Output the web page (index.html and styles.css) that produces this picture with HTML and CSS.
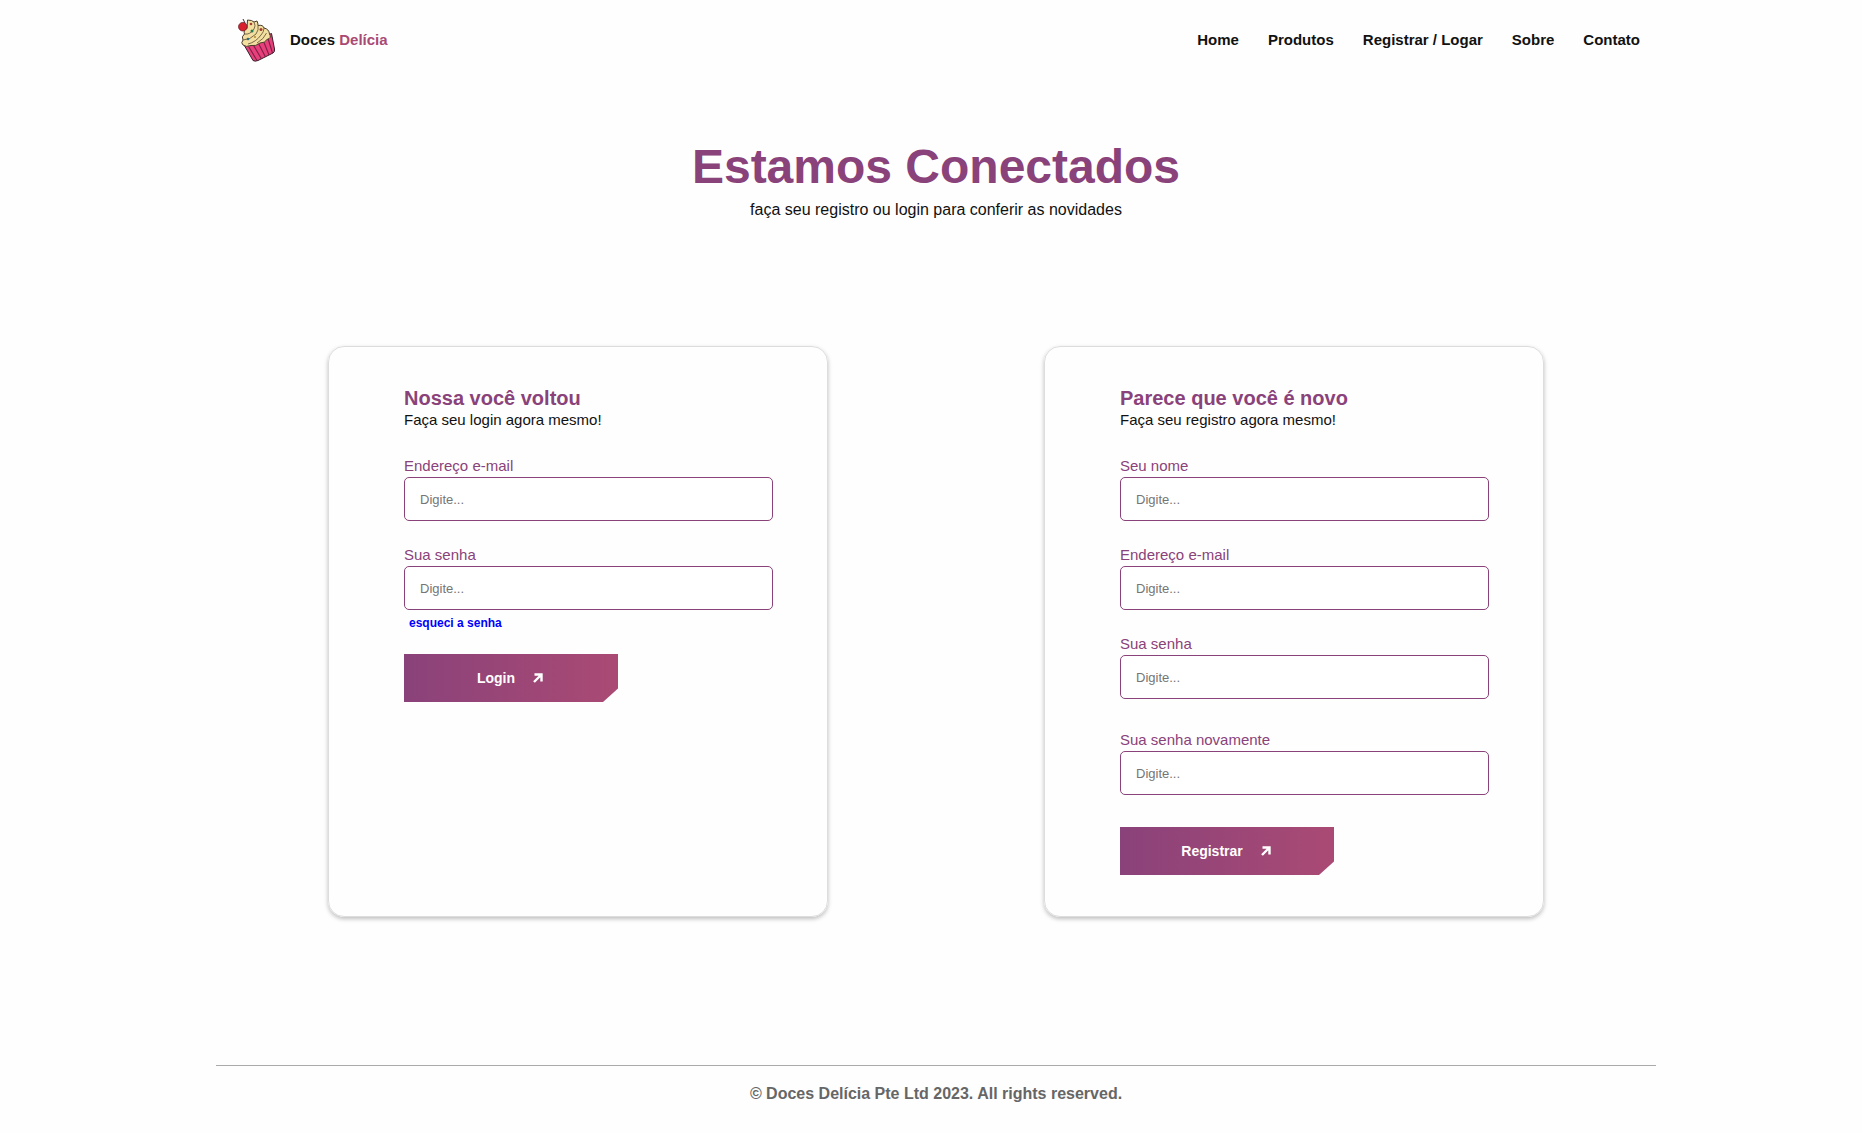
FILE: index.html
```html
<!DOCTYPE html>
<html lang="pt-BR">
<head>
<meta charset="utf-8">
<meta name="viewport" content="width=device-width, initial-scale=1">
<title>Doces Delícia</title>
<link rel="stylesheet" href="styles.css">
</head>
<body>
<div class="page">
  <header class="header">
    <a class="brand" href="#">
      <svg class="brand-logo" viewBox="0 0 38 44" aria-hidden="true">
        <path d="M5.500 26 L15 42.500 Q17 43.800 20 42.500 L35 35 Q37 34 36.500 31 L33.500 15.500 Z" fill="#e8407a" stroke="#33202a" stroke-width="1"/>
        <path d="M10 27.500 L19 42.500 M15 26.500 L23.500 41 M20 24.500 L27.500 39 M25 22 L31 37 M29.500 19 L34.500 35" fill="none" stroke="#7d1f48" stroke-width="1.100"/>
        <path d="M9.500 2 Q14 2 16 4 L19 3 Q20 5 20 7.500 Q25 6.500 26 10 Q31 11 31.500 16 Q34 20 29 21.500 Q27 25 22 25 Q18 28.500 13 27.500 Q8 29.500 5 27 Q2.500 25 5 22 Q3 18.500 6.500 16 Q5 12 9 10.500 Z" fill="#f3dfa0" stroke="#4a3c2a" stroke-width="1"/>
        <path d="M6.500 16 Q12 17 16 11 Q18 8 16 4 M5 22 Q12 22 18 16 Q21 12 20 7.500 M10 26 Q18 24 23 17 Q26 14 26 10 M19 25 Q26 21 28.500 15" fill="none" stroke="#6d5b3d" stroke-width="0.900"/>
        <circle cx="4.800" cy="8.700" r="4.300" fill="#d8202f" stroke="#5b1820" stroke-width="0.700"/>
        <path d="M7 5 L5 1" fill="none" stroke="#47242a" stroke-width="1"/>
        <circle cx="13" cy="6" r="1.300" fill="#a33c31"/><circle cx="14" cy="13" r="1.500" fill="#267a58"/>
        <circle cx="23" cy="11.500" r="1.500" fill="#a33c31"/><circle cx="10" cy="21" r="1.300" fill="#2d7181"/><circle cx="17" cy="19" r="1" fill="#b58a2d"/>
      </svg>
      <span class="brand-name">Doces <span class="brand-accent">Delícia</span></span>
    </a>
    <nav class="nav">
      <a href="#">Home</a>
      <a href="#">Produtos</a>
      <a href="#">Registrar / Logar</a>
      <a href="#">Sobre</a>
      <a href="#">Contato</a>
    </nav>
  </header>

  <main>
    <section class="intro">
      <h1>Estamos Conectados</h1>
      <p>faça seu registro ou login para conferir as novidades</p>
    </section>

    <div class="cards">
      <form class="card">
        <h2>Nossa você voltou</h2>
        <p class="lead">Faça seu login agora mesmo!</p>
        <div class="field">
          <label for="login-email">Endereço e-mail</label>
          <input id="login-email" type="email" placeholder="Digite...">
        </div>
        <div class="field">
          <label for="login-password">Sua senha</label>
          <input id="login-password" type="password" placeholder="Digite...">
        </div>
        <a class="forgot" href="#">esqueci a senha</a>
        <button class="button" type="button">Login
          <svg class="arrow" viewBox="0 0 10 10" aria-hidden="true"><path d="M1.500 1.500H8.500V8.500M8.500 1.500L1 9"/></svg>
        </button>
      </form>

      <form class="card">
        <h2>Parece que você é novo</h2>
        <p class="lead">Faça seu registro agora mesmo!</p>
        <div class="field">
          <label for="name">Seu nome</label>
          <input id="name" type="text" placeholder="Digite...">
        </div>
        <div class="field">
          <label for="email">Endereço e-mail</label>
          <input id="email" type="email" placeholder="Digite...">
        </div>
        <div class="field">
          <label for="password">Sua senha</label>
          <input id="password" type="password" placeholder="Digite...">
        </div>
        <div class="field field-confirm">
          <label for="confirm">Sua senha novamente</label>
          <input id="confirm" type="password" placeholder="Digite...">
        </div>
        <button class="button button-register" type="button">Registrar
          <svg class="arrow" viewBox="0 0 10 10" aria-hidden="true"><path d="M1.500 1.500H8.500V8.500M8.500 1.500L1 9"/></svg>
        </button>
      </form>
    </div>
  </main>

  <footer class="footer">© Doces Delícia Pte Ltd 2023. All rights reserved.</footer>
</div>
</body>
</html>
```
FILE: styles.css
```css
* {
  box-sizing: border-box;
  margin: 0;
  padding: 0;
}

body {
  padding-left: 10px;
  background: #fefefe;
  color: #111;
  font-family: "Liberation Sans", Arial, sans-serif;
  font-size: 16px;
}

a {
  text-decoration: none;
}

.page {
  max-width: 1440px;
  margin: 0 auto;
}

.header {
  display: flex;
  justify-content: space-between;
  align-items: center;
  height: 80px;
  padding: 0 16px 0 22px;
  font-size: 15px;
  font-weight: 700;
}

.header a {
  color: #111;
}

.brand {
  display: flex;
  align-items: center;
  gap: 14px;
}

.brand-logo {
  width: 38px;
  height: 44px;
}

.brand-name,
.nav {
  padding-bottom: 2px;
}

.header .brand-accent {
  color: #aa4a74;
}

.nav {
  display: flex;
  gap: 29px;
}

.intro {
  padding-top: 57px;
  text-align: center;
}

h1 {
  color: #8a427a;
  font-size: 48px;
  line-height: 60px;
}

.intro p {
  line-height: 26px;
}

.cards {
  display: flex;
  justify-content: center;
  flex-wrap: wrap;
  gap: 216px;
  padding-top: 123px;
}

.card {
  width: 500px;
  padding: 39px 54px 41px 75px;
  border: 1px solid #ddd;
  border-radius: 16px;
  box-shadow: 0 2px 4px rgba(0, 0, 0, 0.25);
}

h2 {
  color: #8a427a;
  font-size: 20px;
  line-height: 24px;
}

.lead {
  margin-bottom: 2px;
  font-size: 15px;
  line-height: 20px;
}

.field {
  padding-top: 25px;
}

.field-confirm {
  padding-top: 32px;
}

.field label {
  display: block;
  padding-bottom: 2px;
  color: #8a427a;
  font-size: 15px;
  line-height: 18px;
}

.field input {
  display: block;
  width: 100%;
  height: 44px;
  padding: 0 15px;
  border: 1px solid #8a427a;
  border-radius: 5px;
  background: #fff;
  font-family: inherit;
  font-size: 13px;
}

.field input::placeholder {
  color: #757575;
}

.forgot {
  display: block;
  padding: 4px 5px 0;
  color: #00f;
  font-size: 12px;
  font-weight: 700;
  line-height: 18px;
}

.button {
  display: flex;
  align-items: center;
  justify-content: center;
  gap: 18px;
  width: 214px;
  height: 48px;
  padding-right: 2px;
  margin-top: 22px;
  border: 0;
  background: linear-gradient(to right, #8a427a, #aa4a74);
  clip-path: polygon(0 0, 100% 0, 100% 72%, 93% 100%, 0 100%);
  color: #fff;
  font-family: inherit;
  font-size: 14px;
  font-weight: 700;
}

.button-register {
  margin-top: 32px;
}

.arrow {
  width: 10px;
  height: 10px;
  fill: none;
  stroke: #fff;
  stroke-width: 2.4;
}

.footer {
  margin-top: 148px;
  padding: 16px 0;
  border-top: 1px solid #aaa;
  color: #666;
  font-weight: 700;
  line-height: 24px;
  text-align: center;
}
```
